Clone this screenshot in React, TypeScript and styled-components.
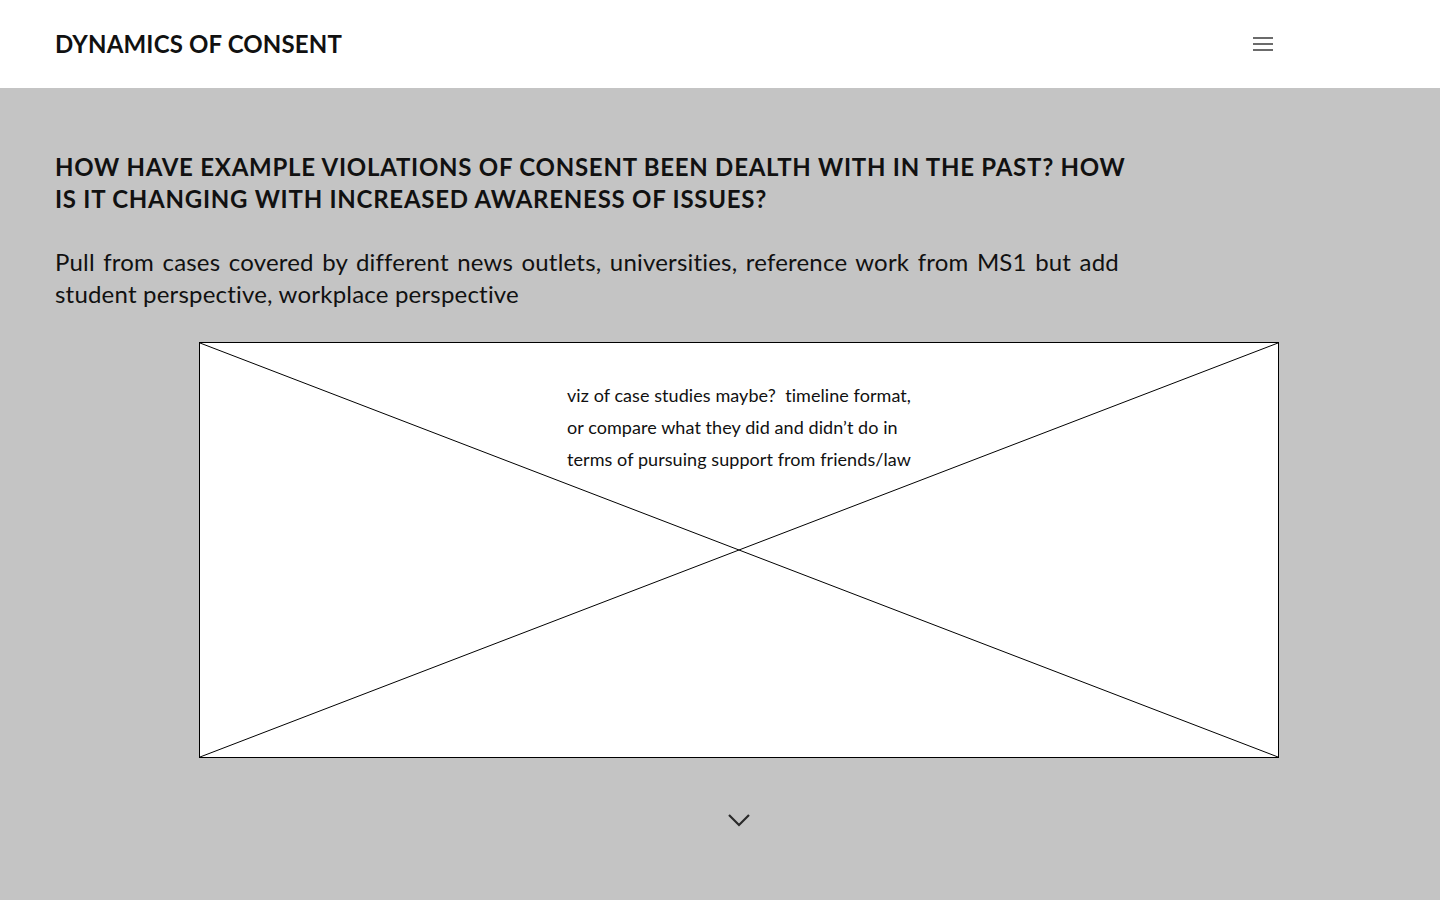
import React from 'react';
import styled, {createGlobalStyle} from "styled-components";

const Global = createGlobalStyle`
  html, body {
    margin: 0;
    padding: 0;
    background: #c4c4c4;
    font-family: Lato, "Liberation Sans", sans-serif;
    color: #111;
  }
`

const Header = styled.header`
  height: 88px;
  background: #fff;
  display: flex;
  align-items: center;
  justify-content: space-between;
  padding: 0 155px 0 55px;
`

const Brand = styled.div`
  font-size: 24px;
  font-weight: 700;
  letter-spacing: 0.15px;
  margin-top: -2px;
  color: #111;
`

const Burger = styled.button`
  width: 20px;
  height: 14px;
  padding: 0;
  border: 0;
  background: none;
  display: flex;
  flex-direction: column;
  justify-content: space-between;
  margin-right: 12px;

  & > span {
    display: block;
    height: 2px;
    background: #6b6b6b;
  }
`

const Main = styled.main`
  padding: 63px 55px 0;
`

const Heading = styled.h2`
  margin: 0;
  width: 1080px;
  font-size: 24px;
  font-weight: 700;
  line-height: 32px;
  letter-spacing: 0.75px;
  color: #111;
`

const Lead = styled.p`
  margin: 31px 0 0;
  width: 1064px;
  font-size: 24px;
  line-height: 32px;
  text-align: justify;
  letter-spacing: 0.2px;
  color: #111;
`

const Placeholder = styled.div`
  position: relative;
  margin: 32px 0 0 144px;
  width: 1078px;
  height: 414px;
  background: #fff;
  border: 1px solid #000;
  display: flex;
  justify-content: center;
`

const Cross = styled.svg`
  position: absolute;
  inset: 0;
  width: 100%;
  height: 100%;
`

const Note = styled.p`
  position: relative;
  margin: 36px 0 0 16px;
  width: 360px;
  font-size: 18px;
  line-height: 32px;
  letter-spacing: 0.07px;
  white-space: pre-wrap;
  color: #111;
`

const Down = styled.div`
  display: flex;
  justify-content: center;
  padding: 54px 0 60px 144px;
  width: 1080px;
`

export default function App() {
    return (
        <>
            <Global/>
            <Header>
                <Brand>DYNAMICS OF CONSENT</Brand>
                <Burger aria-label="menu"><span/><span/><span/></Burger>
            </Header>
            <Main>
                <Heading>HOW HAVE EXAMPLE VIOLATIONS OF CONSENT BEEN DEALTH WITH IN THE PAST? HOW IS IT CHANGING WITH INCREASED AWARENESS OF ISSUES?</Heading>
                <Lead>Pull from cases covered by different news outlets, universities, reference work from MS1 but add student perspective, workplace perspective</Lead>
                <Placeholder>
                    <Cross viewBox="0 0 100 100" preserveAspectRatio="none">
                        <line x1="0" y1="0" x2="100" y2="100" stroke="#000" strokeWidth="1" vectorEffect="non-scaling-stroke"/>
                        <line x1="100" y1="0" x2="0" y2="100" stroke="#000" strokeWidth="1" vectorEffect="non-scaling-stroke"/>
                    </Cross>
                    <Note>{"viz of case studies maybe?  timeline format,\nor compare what they did and didn’t do in\nterms of pursuing support from friends/law"}</Note>
                </Placeholder>
                <Down>
                    <svg width="24" height="16" viewBox="0 0 24 16">
                        <polyline points="2,3 12,13 22,3" fill="none" stroke="#2a2a2a" strokeWidth="2.2"/>
                    </svg>
                </Down>
            </Main>
        </>
    );
}
